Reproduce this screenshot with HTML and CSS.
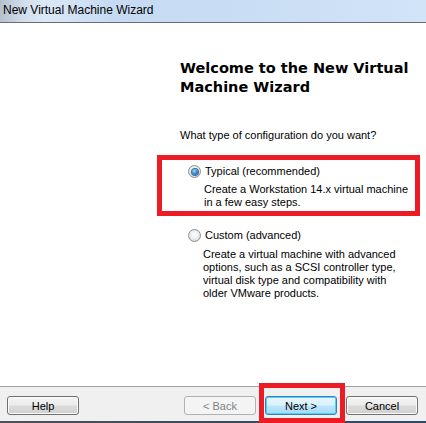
FILE: index.html
```html
<!DOCTYPE html>
<html>
<head>
<meta charset="utf-8">
<link rel="stylesheet" href="styles.css">
</head>
<body>
<div class="window">
  <div class="titlebar">New Virtual Machine Wizard</div>
  <div class="main">
    <div class="panel">
      <h1 class="heading">Welcome to the New Virtual<br>Machine Wizard</h1>
      <p class="question">What type of configuration do you want?</p>
      <div class="option highlight">
        <div class="opt-row"><span class="radio checked"><span class="dot"></span></span><span>Typical (recommended)</span></div>
        <p class="desc">Create a Workstation 14.x virtual machine<br>in a few easy steps.</p>
      </div>
      <div class="option custom">
        <div class="opt-row"><span class="radio"></span><span>Custom (advanced)</span></div>
        <p class="desc">Create a virtual machine with advanced<br>options, such as a SCSI controller type,<br>virtual disk type and compatibility with<br>older VMware products.</p>
      </div>
    </div>
  </div>
  <div class="separator"></div>
  <div class="footer">
    <button class="btn">Help</button>
    <div class="spacer"></div>
    <div class="btn-group">
      <button class="btn disabled">&lt; Back</button>
      <button class="btn default">Next &gt;</button>
      <button class="btn">Cancel</button>
    </div>
    <div class="mark"></div>
  </div>
  <div class="frame"></div>
</div>
</body>
</html>
```
FILE: styles.css
```css
html, body {
  margin: 0;
  padding: 0;
  background: #ffffff;
}
.window {
  width: 426px;
  height: 423px;
  display: flex;
  flex-direction: column;
  font-family: "Liberation Sans", Arial, sans-serif;
  font-size: 11px;
  color: #000;
  overflow: hidden;
}
.titlebar {
  height: 22px;
  line-height: 21px;
  padding-left: 3px;
  font-size: 12px;
  color: #000;
  background: linear-gradient(to right, #b4c0cc 0px, #d3dfec 25px, #dbe8f7 45px, #c6dbf3 110px, #c9ddf4 250px, #d2e4f8 426px);
  border-bottom: 1px solid #656d76;
  flex: none;
}
.main {
  flex: 1;
  background: #fff;
}
.panel {
  margin-left: 157px;
  margin-right: 6px;
}
.heading {
  margin: 36px 0 0 23px;
  font-family: "DejaVu Sans", Verdana, sans-serif;
  font-weight: bold;
  font-size: 14.5px;
  line-height: 19px;
  color: #000;
}
.question {
  margin: 32px 0 0 23px;
  line-height: 13px;
}
.option {
  line-height: 13px;
}
.option.highlight {
  margin-top: 13px;
  border: 5px solid #ed1c24;
  padding: 5px 0 2px 26px;
}
.option.custom {
  margin-top: 13px;
  padding-left: 31px;
}
.opt-row {
  display: flex;
  align-items: center;
  gap: 4px;
  height: 13px;
}
.radio {
  width: 11px;
  height: 11px;
  border-radius: 50%;
  border: 1px solid #8a8d91;
  background: radial-gradient(circle at 50% 40%, #ffffff 0%, #eeeeee 45%, #cfcfcf 100%);
  display: flex;
  align-items: center;
  justify-content: center;
  flex: none;
}
.dot {
  width: 6px;
  height: 6px;
  border-radius: 50%;
  background: radial-gradient(circle at 40% 35%, #a8e0ff 0%, #3a8fd0 45%, #0f4a85 100%);
  box-shadow: 0 0 0 1px #3d6e98;
}
.desc {
  margin: 5px 0 0 16px;
  line-height: 13px;
}
.option.custom .desc {
  margin-top: 6px;
  margin-left: 15px;
}
.separator {
  height: 1px;
  background: #a0a0a0;
  flex: none;
}
.footer {
  height: 34px;
  flex: none;
  background: #f0f0f0;
  display: flex;
  align-items: flex-start;
  padding: 9px 8px 0 7px;
  box-sizing: border-box;
  position: relative;
}
.spacer {
  flex: 1;
}
.btn-group {
  display: flex;
  gap: 9px;
}
.btn {
  width: 72px;
  height: 19px;
  margin: 0;
  padding: 0;
  box-sizing: border-box;
  border: 1px solid #707070;
  border-radius: 3px;
  font-family: "Liberation Sans", Arial, sans-serif;
  font-size: 11px;
  color: #000;
  background: linear-gradient(to bottom, #f4f4f4 0%, #ececec 48%, #dcdcdc 52%, #d0d0d0 100%);
  box-shadow: inset 0 0 0 1px #fbfbfb;
}
.btn.disabled {
  border-color: #adb2b5;
  color: #838383;
  background: #f4f4f4;
  box-shadow: none;
}
.btn.default {
  border-color: #3c7fb1;
  background: linear-gradient(to bottom, #eaf6fd 0%, #d9f0fc 48%, #bee6fd 52%, #a7d9f5 100%);
  box-shadow: inset 0 0 0 1px #48d4fc;
}
.mark {
  position: absolute;
  left: 259px;
  top: -4px;
  width: 86px;
  height: 40px;
  box-sizing: border-box;
  border: 5px solid #ed1c24;
}
.frame {
  height: 2px;
  flex: none;
  background: linear-gradient(to right, #4f5256 0%, #3b4b5c 50%, #2e4a66 100%);
}
```
